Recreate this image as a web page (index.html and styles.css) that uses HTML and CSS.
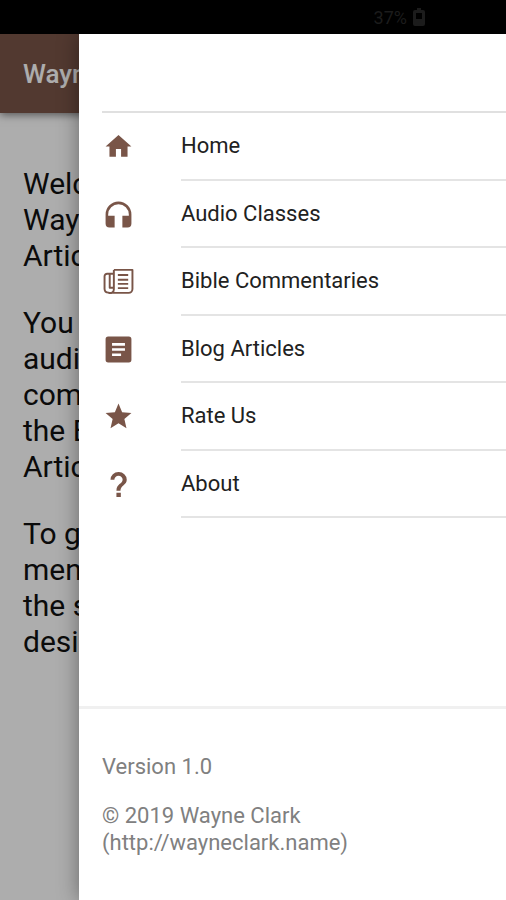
FILE: index.html
```
<!DOCTYPE html>
<html lang="en">
<head>
  <meta charset="UTF-8">
  <meta name="viewport" content="width=device-width, initial-scale=1.0">
  <title>Wayne Clark</title>
  <link rel="stylesheet" href="styles.css">
</head>
<body>
  <div class="status-bar">
    <span>37%</span>
    <svg class="battery" viewBox="0 0 12 18"><path d="M4 0h4v2h2a2 2 0 0 1 2 2v12a2 2 0 0 1-2 2H2a2 2 0 0 1-2-2V4a2 2 0 0 1 2-2h2zM3 5v6h6V5z"/></svg>
  </div>
  <div class="screen">
    <div class="page">
      <header class="app-bar">
        <h1>Wayne</h1>
      </header>
      <main class="content">
        <p>Welcome<br>Wayne<br>Articles</p>
        <p>You can<br>audio<br>comments<br>the Blog<br>Articles</p>
        <p>To get<br>menu<br>the site<br>desired</p>
      </main>
    </div>
    <div class="overlay"></div>
    <aside class="drawer">
      <nav class="menu">
        <a class="menu-item" href="#">
          <svg viewBox="0 0 24 24"><path d="M10 20v-6h4v6h5v-8h3L12 3 2 12h3v8z"/></svg>
          <span>Home</span>
        </a>
        <a class="menu-item" href="#">
          <svg viewBox="0 0 24 24"><path d="M12 2a10 10 0 0 0-10 10v7a3 3 0 0 0 3 3h4v-9H4v-1a8 8 0 0 1 16 0v1h-5v9h4a3 3 0 0 0 3-3v-7A10 10 0 0 0 12 2z"/></svg>
          <span>Audio Classes</span>
        </a>
        <a class="menu-item" href="#">
          <svg viewBox="0 0 24 24">
            <path class="line" d="M8.400 3H22.800V17.800a3 3 0 0 1-3 3H4.200M8.400 3V18a2.800 2.800 0 0 1-4.200 2.600A3 3 0 0 1 1.200 17.800V8a2 2 0 0 1 2-2H8.400M5.200 6.200V16.800H8"/>
            <path d="M11.500 6.200h8v1.600h-8zM11.500 9.800h8v1.600h-8zM11.500 13.200h8v1.400h-8zM11.500 16.500h8v1.400h-8z"/>
          </svg>
          <span>Bible Commentaries</span>
        </a>
        <a class="menu-item" href="#">
          <svg viewBox="0 0 24 24"><path d="M20 2H4a2 2 0 0 0-2 2v16a2 2 0 0 0 2 2h16a2 2 0 0 0 2-2V4a2 2 0 0 0-2-2zm-6 15H7v-2h7zm3-4H7v-2h10zm0-4H7V7h10z"/></svg>
          <span>Blog Articles</span>
        </a>
        <a class="menu-item" href="#">
          <svg viewBox="0 0 24 24"><path d="M12 17.270 18.180 21l-1.640-7.030L22 9.240l-7.190-.61L12 2 9.190 8.630 2 9.240l5.460 4.730L5.820 21z"/></svg>
          <span>Rate Us</span>
        </a>
        <a class="menu-item" href="#">
          <svg viewBox="0 0 24 24"><path d="M10.400 18.300h3.400v3.400h-3.400zM12 2.400a6.200 6 0 0 0-6.200 6h3a3.200 3.200 0 0 1 6.400 0c0 3.200-4.800 3-4.800 8.400h3.100c0-3.800 4.900-4.500 4.900-8.400A6.200 6 0 0 0 12 2.400z"/></svg>
          <span>About</span>
        </a>
      </nav>
      <footer class="drawer-footer">
        <p>Version 1.0</p>
        <p>© 2019 Wayne Clark<br>(http://wayneclark.name)</p>
      </footer>
    </aside>
  </div>
</body>
</html>
```
FILE: styles.css
```
* {
  box-sizing: border-box;
}
body {
  margin: 0;
  min-height: 100vh;
  display: flex;
  flex-direction: column;
  font-family: Roboto, sans-serif;
  background-color: #fff;
}
p, h1 {
  margin: 0;
}
.status-bar {
  height: 34px;
  display: flex;
  align-items: center;
  justify-content: flex-end;
  gap: 6px;
  padding: 0 81px 0 0;
  background-color: #000;
  color: #1c1c1c;
  font-size: 18px;
}
.battery {
  width: 12px;
  height: 18px;
  fill: #1c1c1c;
}
.screen {
  position: relative;
  flex: 1;
  overflow: hidden;
}
.app-bar {
  height: 79px;
  display: flex;
  align-items: center;
  padding: 0 23px;
  background-color: #795548;
  color: #fff;
  box-shadow: 0 2px 8px rgba(0, 0, 0, 0.5);
}
.app-bar h1 {
  font-size: 26px;
  font-weight: 500;
}
.content {
  padding: 53px 23px 0;
  color: #111;
  font-size: 30px;
  line-height: 36px;
}
.content p {
  margin-bottom: 31px;
}
.overlay {
  position: absolute;
  inset: 0;
  background-color: rgba(0, 0, 0, 0.32);
}
.drawer {
  position: absolute;
  top: 0;
  right: 0;
  bottom: 0;
  left: 79px;
  display: flex;
  flex-direction: column;
  justify-content: space-between;
  background-color: #fff;
  box-shadow: 0 0 20px rgba(0, 0, 0, 0.4);
}
.menu {
  margin: 77px 0 0 23px;
  border-top: 2px solid #e0e0e0;
  display: grid;
  grid-auto-rows: 1fr;
  height: 407px;
}
.menu-item {
  display: grid;
  grid-template-columns: 78px 1fr;
  padding-left: 1px;
  color: #212121;
  font-size: 22px;
  text-decoration: none;
}
.menu-item svg {
  width: 31px;
  height: 31px;
  align-self: center;
  fill: #795548;
}
.menu-item .line {
  fill: none;
  stroke: #795548;
  stroke-width: 1.5;
  stroke-linejoin: round;
}
.menu-item span {
  display: flex;
  align-items: center;
  border-bottom: 2px solid #e4e4e4;
}
.drawer-footer {
  padding: 44px 23px;
  border-top: 3px solid #f0f0f0;
  color: #808080;
  font-size: 22px;
  line-height: 27px;
}
.drawer-footer p + p {
  margin-top: 22px;
}
```
